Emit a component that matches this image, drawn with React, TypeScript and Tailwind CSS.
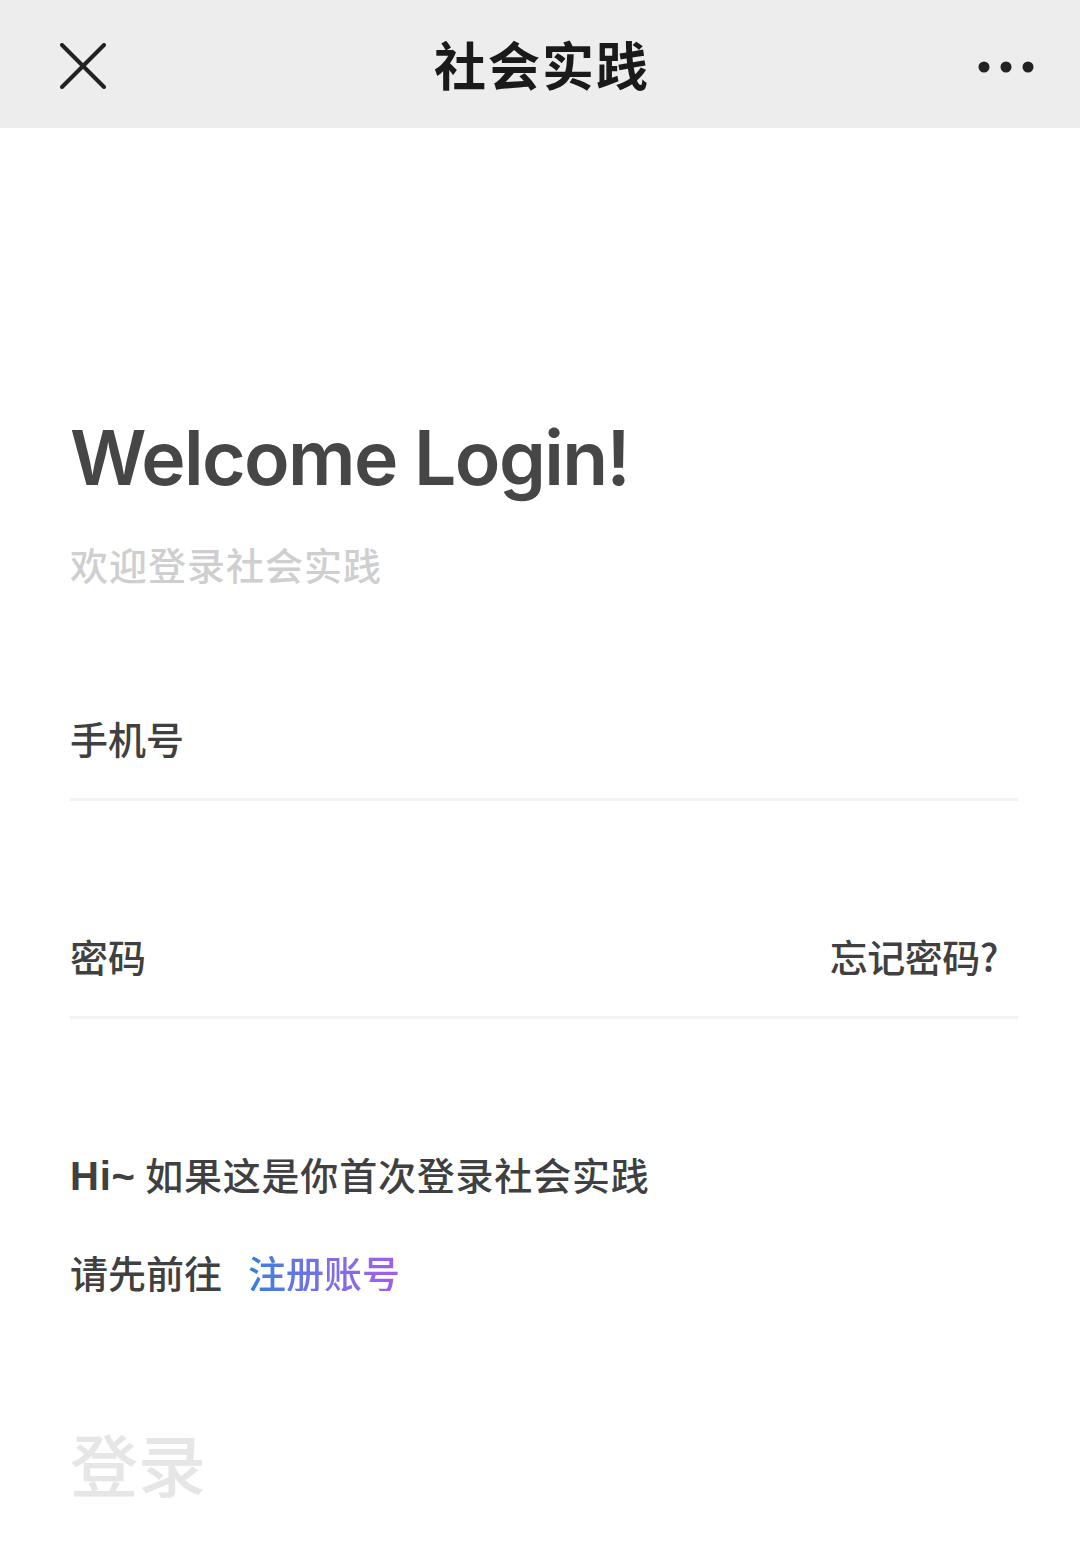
import React from "react";

export default function App() {
  const cjk = { fontFamily: '"Noto Sans CJK SC", "Noto Sans", sans-serif' };
  return (
    <div className="w-[1080px] h-[1552px] bg-white overflow-hidden" style={cjk}>
      <div className="h-[128px] bg-[#ededed] flex items-center justify-between pl-[60px] pr-[46px]">
        <svg width="46" height="46" viewBox="0 0 46 46" className="mt-[4px]">
          <path d="M2 2 L44 44 M44 2 L2 44" stroke="#222" strokeWidth="4" strokeLinecap="round" />
        </svg>
        <div className="text-[52px] font-bold text-[#1a1a1a] leading-none tracking-[2px]">社会实践</div>
        <svg width="56" height="14" viewBox="0 0 56 14" className="mt-[6px]">
          <circle cx="6" cy="7" r="5.5" fill="#222" />
          <circle cx="28" cy="7" r="5.5" fill="#222" />
          <circle cx="50" cy="7" r="5.5" fill="#222" />
        </svg>
      </div>
      <div className="pl-[70px] pr-[62px] flex flex-col">
        <div
          className="mt-[292px] text-[75px] leading-[75px] font-semibold text-[#464646] tracking-[-1.6px]"
          style={{ fontFamily: '"Inter", "Liberation Sans", sans-serif' }}
        >
          Welcome Login!
        </div>
        <div className="mt-[50px] text-[38px] leading-[38px] font-medium text-[#cfcfcf] tracking-[1px]">欢迎登录社会实践</div>
        <div className="mt-[136px] text-[38px] leading-[38px] font-medium text-[#404040]">手机号</div>
        <div className="mt-[41px] h-[3px] bg-[#f3f3f3]" />
        <div className="mt-[136px] flex justify-between items-center pr-[20px]">
          <span className="text-[38px] leading-[38px] font-medium text-[#404040]">密码</span>
          <span className="text-[38px] leading-[38px] font-medium text-[#404040] tracking-[-0.5px]">忘记密码?</span>
        </div>
        <div className="mt-[41px] h-[3px] bg-[#f3f3f3]" />
        <div className="mt-[136px] text-[38px] leading-[38px] font-medium text-[#404040] tracking-[0.8px]">
          <span className="font-bold text-[40px]" style={{ fontFamily: '"Liberation Sans", sans-serif' }}>Hi~</span>{" "}如果这是你首次登录社会实践
        </div>
        <div className="mt-[58px] text-[38px] leading-[38px] font-medium text-[#404040] flex">
          <span>请先前往</span>
          <span className="ml-[26px] bg-gradient-to-r from-[#2f7fe0] to-[#a35bf0] bg-clip-text text-transparent">注册账号</span>
        </div>
        <div className="mt-[138px] text-[68px] leading-[68px] font-medium text-[#e6e6e6]">登录</div>
      </div>
    </div>
  );
}
